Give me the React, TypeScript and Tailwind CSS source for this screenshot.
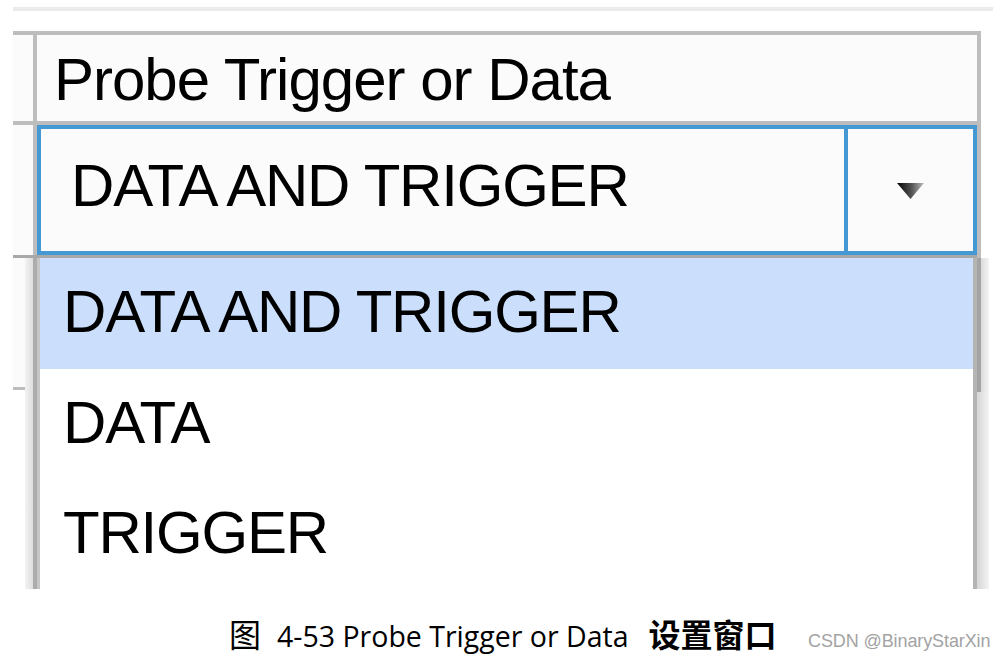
import React from "react";

const sans = { fontFamily: '"Liberation Sans", Arial, sans-serif' };

function Arrow() {
  return (
    <svg width="27" height="16" viewBox="0 0 27 16">
      <defs>
        <linearGradient id="arr" x1="0" x2="1" y1="0" y2="0">
          <stop offset="0" stopColor="#000" />
          <stop offset="0.55" stopColor="#555" />
          <stop offset="1" stopColor="#bdbdbd" />
        </linearGradient>
      </defs>
      <polygon points="0,0 27,0 13.5,16" fill="url(#arr)" />
    </svg>
  );
}

const options = ["DATA AND TRIGGER", "DATA", "TRIGGER"];

export default function App() {
  return (
    <div className="w-[1004px] h-[660px] bg-white overflow-hidden text-black" style={sans}>
      <div className="relative h-[589px]">
        <div className="pt-[7px] pl-[13px]">
          <div className="w-[980px] h-[4px] bg-[#ebebeb]" />
        </div>

        {/* property table */}
        <div className="ml-[13px] mt-[20px] w-[968px] border-t-4 border-r-4 border-[#bdbdbd] bg-[#fbfbfb]">
          <div className="flex h-[86px]">
            <div className="w-[20px]" />
            <div className="w-[4px] bg-[#bdbdbd]" />
            <div className="flex-1 pl-[17px] pt-[15px] text-[60px] leading-[60px] tracking-[-1px] whitespace-nowrap">
              Probe Trigger or Data
            </div>
          </div>
          <div className="h-[4px] bg-[#bdbdbd]" />
          <div className="flex h-[130px]">
            <div className="w-[20px]" />
            <div className="w-[4px] bg-[#bdbdbd]" />
            <div className="flex flex-1 border-4 border-[#4499d5]">
              <div className="flex-1 pl-[30px] pt-[27px] text-[60px] leading-[60px] tracking-[-1.2px] whitespace-nowrap">
                DATA AND TRIGGER
              </div>
              <div className="w-[4px] bg-[#4499d5]" />
              <div className="w-[125px] flex items-center justify-center pt-[2px]">
                <Arrow />
              </div>
            </div>
          </div>
          <div className="h-[3px] bg-[#a8a8a8]" />
          <div className="flex h-[129px]">
            <div className="w-[20px]" />
            <div className="w-[4px] bg-[#bdbdbd]" />
            <div className="flex-1" />
          </div>
          <div className="h-[3px] bg-[#bdbdbd]" />
        </div>

        {/* open dropdown list */}
        <div className="absolute top-[258px] left-[25px] w-[964px] h-[331px] flex">
          <div className="w-[8px] bg-gradient-to-r from-[#f3f3f3] to-[#dedede]" />
          <div className="w-[4px] bg-[#acacac]" />
          <div className="w-[3px] bg-[#c6c6c6]" />
          <div className="w-[933px] bg-white flex flex-col">
            {options.map((o, i) => (
              <div
                key={o}
                className={
                  i === 0
                    ? "h-[111px] bg-[#cbdffc] pl-[23px] pt-[24px] text-[60px] leading-[60px] tracking-[-1.2px] whitespace-nowrap"
                    : "h-[110px] pl-[23px] pt-[24px] text-[60px] leading-[60px] tracking-[-1.2px] whitespace-nowrap"
                }
              >
                {o}
              </div>
            ))}
          </div>
          <div className="w-[4px] bg-[#b4b4b4]" />
          <div className="w-[12px] flex flex-col">
            <div className="h-[134px] flex">
              <div className="w-[4px] bg-[#a4a4a4]" />
              <div className="flex-1 bg-gradient-to-r from-[#dcdcdc] to-[#f4f4f4]" />
            </div>
            <div className="flex-1 bg-gradient-to-r from-[#d6d6d6] to-[#f4f4f4]" />
          </div>
        </div>
      </div>

      {/* caption */}
      <div className="flex items-baseline pl-[229px] pt-[26px]">
        <div className="w-[579px] flex items-baseline whitespace-nowrap">
          <span className="text-[32px] leading-[36px]" style={{ fontFamily: '"Noto Sans CJK SC", sans-serif' }}>
            图
          </span>
          <span className="ml-[16px] text-[28.5px] leading-[36px]" style={{ fontFamily: '"Open Sans", "Noto Sans CJK SC", sans-serif' }}>
            4-53 Probe Trigger or Data
          </span>
          <span
            className="ml-[20px] text-[32px] leading-[36px] font-bold"
            style={{ fontFamily: '"Noto Sans CJK SC", sans-serif' }}
          >
            设置窗口
          </span>
        </div>
        <span className="text-[18px] text-[#a3a3a3] tracking-[-0.1px] whitespace-nowrap">CSDN @BinaryStarXin</span>
      </div>
    </div>
  );
}
